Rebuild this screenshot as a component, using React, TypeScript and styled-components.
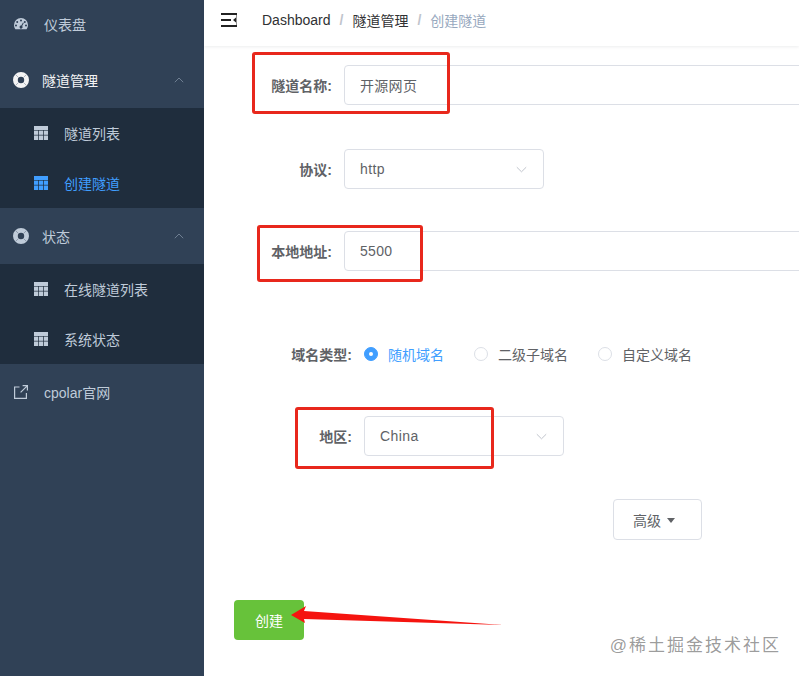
import React from "react";
import styled, { createGlobalStyle } from "styled-components";

const FONT = `"Liberation Sans", "Noto Sans CJK SC", sans-serif`;

const GlobalStyle = createGlobalStyle`
  html, body {
    margin: 0;
    padding: 0;
    height: 100%;
    overflow: hidden;
    background: #fff;
    font-family: ${FONT};
  }
  * { box-sizing: border-box; }
`;

const Layout = styled.div`
  position: relative;
  display: flex;
  width: 799px;
  height: 676px;
  overflow: hidden;
`;

/* sidebar */
const Sidebar = styled.aside`
  flex: 0 0 204px;
  height: 100%;
  background: #304156;
  font-size: 14px;
  color: #bfcbd9;
`;

const MenuList = styled.nav`
  margin-top: -4px;
`;

const MenuItem = styled.div<{ $open?: boolean; $gap?: number }>`
  display: flex;
  align-items: center;
  height: 56px;
  padding-left: 14px;
  gap: ${(p) => p.$gap ?? 16}px;
  color: ${(p) => (p.$open ? "#f4f4f5" : "#bfcbd9")};
`;

const GroupItem = styled(MenuItem)`
  padding-left: 13px;
  gap: 13px;
  position: relative;
`;

const Chevron = styled.svg`
  margin-left: auto;
  margin-right: 20px;
  flex: none;
`;

const SubMenu = styled.div`
  background: #1f2d3d;
`;

const SubItem = styled.div<{ $active?: boolean }>`
  display: flex;
  align-items: center;
  height: 50px;
  padding-left: 34px;
  gap: 16px;
  color: ${(p) => (p.$active ? "#409eff" : "#bfcbd9")};
`;

const GaugeIcon = () => (
  <svg width="14" height="14" viewBox="0 0 14 14">
    <path
      fill="currentColor"
      fillRule="evenodd"
      d="M7 1a7 7 0 0 0-7 7c0 1.6.5 3 1.4 4.2h11.2A7 7 0 0 0 14 8a7 7 0 0 0-7-7zM3.2 4a1 1 0 1 1 0 2 1 1 0 0 1 0-2zM7 2.4a1 1 0 1 1 0 2 1 1 0 0 1 0-2zm3.8 1.6a1 1 0 1 1 0 2 1 1 0 0 1 0-2zM2 7.4a1 1 0 1 1 0 2 1 1 0 0 1 0-2zm10 0a1 1 0 1 1 0 2 1 1 0 0 1 0-2zM9 5.6l.8.5-1.6 3a1.5 1.5 0 1 1-.9-.5L9 5.6z"
    />
  </svg>
);

const RingIcon = () => (
  <svg width="16" height="16" viewBox="0 0 16 16">
    <circle cx="8" cy="8" r="5.6" fill="none" stroke="currentColor" strokeWidth="4.8" />
    <path stroke="#304156" strokeOpacity=".45" strokeWidth=".8" d="M2.5 2.5 5.2 5.2M13.5 2.5l-2.7 2.7M2.5 13.5l2.7-2.7M13.5 13.5l-2.7-2.7" />
  </svg>
);

const TableIcon = () => (
  <svg width="14" height="14" viewBox="0 0 14 14" fill="currentColor">
    <rect x="0" y="0" width="14" height="4" />
    <rect x="0" y="4.6" width="4.2" height="4.2" />
    <rect x="4.9" y="4.6" width="4.2" height="4.2" />
    <rect x="9.8" y="4.6" width="4.2" height="4.2" />
    <rect x="0" y="9.5" width="4.2" height="4.5" />
    <rect x="4.9" y="9.5" width="4.2" height="4.5" />
    <rect x="9.8" y="9.5" width="4.2" height="4.5" />
  </svg>
);

const LinkIcon = () => (
  <svg width="14" height="14" viewBox="0 0 14 14" fill="none" stroke="currentColor" strokeWidth="1.2">
    <path d="M5.5 2H.6v11.4H12.4V8" />
    <path d="M8.6.6h4.8v4.8M13.2.8 6.6 7.4" />
  </svg>
);

const UpChevron = () => (
  <Chevron width="10" height="6" viewBox="0 0 10 6" fill="none" stroke="#6f7f92" strokeWidth="1">
    <path d="M.8 5.2 5 1l4.2 4.2" />
  </Chevron>
);

/* main */
const Main = styled.main`
  flex: 1;
  min-width: 0;
`;

const Navbar = styled.header`
  display: flex;
  align-items: center;
  height: 46px;
  padding: 0 0 6px 17px;
  background: #fff;
  box-shadow: 0 1px 3px rgba(0, 21, 41, 0.08);
`;

const Breadcrumb = styled.div`
  display: flex;
  align-items: center;
  margin-left: 25px;
  font-size: 14px;
  color: #303133;
`;

const Crumb = styled.span<{ $current?: boolean }>`
  color: ${(p) => (p.$current ? "#97a8be" : "#303133")};
`;

const Slash = styled.span`
  margin: 0 9px;
  font-weight: 700;
  color: #c0c4cc;
`;

const Form = styled.form`
  padding-left: 30px;
  font-size: 14px;
  color: #606266;
`;

const Row = styled.div<{ $top: number }>`
  display: flex;
  align-items: center;
  min-height: 40px;
  margin-top: ${(p) => p.$top}px;
`;

const Label = styled.label<{ $width?: number }>`
  flex: none;
  width: ${(p) => p.$width ?? 98}px;
  padding-right: 0;
  margin-right: 12px;
  text-align: right;
  font-weight: 700;
  color: #606266;
`;

const TextInput = styled.input`
  flex: none;
  width: 500px;
  height: 40px;
  padding: 0 15px;
  border: 1px solid #dcdfe6;
  border-radius: 4px;
  outline: none;
  font: 14px ${FONT};
  letter-spacing: 0.3px;
  color: #606266;
  background: #fff;
`;

const SelectBox = styled.div`
  display: flex;
  align-items: center;
  justify-content: space-between;
  width: 200px;
  height: 40px;
  padding: 0 16px 0 15px;
  border: 1px solid #dcdfe6;
  border-radius: 4px;
  letter-spacing: 0.4px;
  color: #606266;
`;

const Radios = styled.div`
  display: flex;
  gap: 30px;
`;

const Radio = styled.span<{ $checked?: boolean }>`
  display: flex;
  align-items: center;
  gap: 10px;
  color: ${(p) => (p.$checked ? "#409eff" : "#606266")};
`;

const RadioDot = styled.span<{ $checked?: boolean }>`
  display: block;
  width: 14px;
  height: 14px;
  border-radius: 50%;
  border: 1px solid ${(p) => (p.$checked ? "#409eff" : "#dcdfe6")};
  background: ${(p) => (p.$checked ? "#409eff" : "#fff")};
  position: relative;
  &::after {
    content: "";
    display: ${(p) => (p.$checked ? "block" : "none")};
    position: absolute;
    left: 4px;
    top: 4px;
    width: 4px;
    height: 4px;
    border-radius: 50%;
    background: #fff;
  }
`;

const AdvancedButton = styled.button`
  display: flex;
  align-items: center;
  gap: 6px;
  height: 41px;
  width: 89px;
  margin: 43px 0 0 379px;
  padding: 0 0 0 19px;
  border: 1px solid #dcdfe6;
  border-radius: 4px;
  background: #fff;
  font: 14px ${FONT};
  color: #606266;
`;

const Caret = styled.span`
  width: 0;
  height: 0;
  border-left: 4.5px solid transparent;
  border-right: 4.5px solid transparent;
  border-top: 5px solid #606266;
  margin-top: 2px;
`;

const CreateButton = styled.button`
  display: block;
  width: 70px;
  height: 40px;
  margin-top: 60px;
  border: none;
  border-radius: 4px;
  background: #67c23a;
  font: 14px ${FONT};
  color: #fff;
`;

/* annotations drawn on top of the screenshot */
const RedBox = styled.div<{ $x: number; $y: number; $w: number; $h: number }>`
  position: absolute;
  left: ${(p) => p.$x}px;
  top: ${(p) => p.$y}px;
  width: ${(p) => p.$w}px;
  height: ${(p) => p.$h}px;
  border: 3px solid #e8281c;
  border-radius: 3px;
  pointer-events: none;
`;

const Arrow = styled.svg`
  position: absolute;
  left: 285px;
  top: 600px;
`;

const Watermark = styled.div`
  position: absolute;
  right: 20px;
  top: 635px;
  font-size: 17px;
  line-height: 22px;
  letter-spacing: 2px;
  margin-right: -2px;
  color: rgba(90, 90, 90, 0.62);
  white-space: nowrap;
`;

const DownChevron = () => (
  <svg width="11" height="7" viewBox="0 0 11 7" fill="none" stroke="#c0c4cc" strokeWidth="1">
    <path d="M.8 1.2 5.5 5.8l4.7-4.6" />
  </svg>
);

const App: React.FC = () => {
  return (
    <Layout>
      <GlobalStyle />
      <Sidebar>
        <MenuList>
          <MenuItem>
            <GaugeIcon />
            仪表盘
          </MenuItem>
          <GroupItem $open>
            <RingIcon />
            隧道管理
            <UpChevron />
          </GroupItem>
          <SubMenu>
            <SubItem>
              <TableIcon />
              隧道列表
            </SubItem>
            <SubItem $active>
              <TableIcon />
              创建隧道
            </SubItem>
          </SubMenu>
          <GroupItem>
            <RingIcon />
            状态
            <UpChevron />
          </GroupItem>
          <SubMenu>
            <SubItem>
              <TableIcon />
              在线隧道列表
            </SubItem>
            <SubItem>
              <TableIcon />
              系统状态
            </SubItem>
          </SubMenu>
          <MenuItem>
            <LinkIcon />
            cpolar官网
          </MenuItem>
        </MenuList>
      </Sidebar>

      <Main>
        <Navbar>
          <svg width="16" height="14" viewBox="0 0 16 14" fill="#222">
            <rect x="0" y="0" width="16" height="2" />
            <rect x="0" y="6" width="10" height="2" />
            <path d="M12 7l3-2.5v5z" />
            <rect x="15" y="0" width="1" height="14" opacity=".5" />
            <rect x="0" y="12" width="16" height="2" />
          </svg>
          <Breadcrumb>
            <Crumb>Dashboard</Crumb>
            <Slash>/</Slash>
            <Crumb>隧道管理</Crumb>
            <Slash>/</Slash>
            <Crumb $current>创建隧道</Crumb>
          </Breadcrumb>
        </Navbar>

        <Form onSubmit={(e) => e.preventDefault()}>
          <Row $top={19}>
            <Label>隧道名称:</Label>
            <TextInput readOnly value="开源网页" />
          </Row>
          <Row $top={44}>
            <Label>协议:</Label>
            <SelectBox>
              http
              <DownChevron />
            </SelectBox>
          </Row>
          <Row $top={42}>
            <Label>本地地址:</Label>
            <TextInput readOnly value="5500" />
          </Row>
          <Row $top={63}>
            <Label $width={118}>域名类型:</Label>
            <Radios>
              <Radio $checked>
                <RadioDot $checked />
                随机域名
              </Radio>
              <Radio>
                <RadioDot />
                二级子域名
              </Radio>
              <Radio>
                <RadioDot />
                自定义域名
              </Radio>
            </Radios>
          </Row>
          <Row $top={42}>
            <Label $width={118}>地区:</Label>
            <SelectBox>
              China
              <DownChevron />
            </SelectBox>
          </Row>
          <AdvancedButton type="button">
            高级
            <Caret />
          </AdvancedButton>
          <CreateButton type="submit">创建</CreateButton>
        </Form>
      </Main>

      <RedBox $x={252} $y={52} $w={198} $h={62} />
      <RedBox $x={257} $y={225} $w={166} $h={57} />
      <RedBox $x={295} $y={407} $w={199} $h={62} />
      <Arrow width="220" height="30" viewBox="285 600 220 30">
        <polygon fill="#f5140f" points="291,615 306,606 304,611 503,625 304,619 305,623" />
      </Arrow>
      <Watermark>@稀土掘金技术社区</Watermark>
    </Layout>
  );
};

export default App;
